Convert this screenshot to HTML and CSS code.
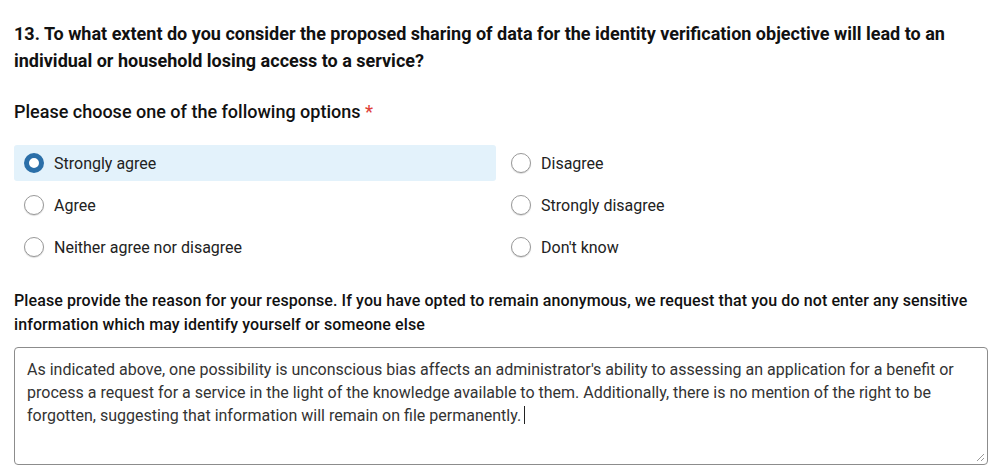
FILE: index.html
```html
<!DOCTYPE html>
<html lang="en">
<head>
<meta charset="utf-8">
<link rel="stylesheet" href="styles.css">
</head>
<body>
<main class="question">
  <h2 class="q-title">13. To what extent do you consider the proposed sharing of data for the identity verification objective will lead to an individual or household losing access to a service?</h2>
  <p class="q-prompt">Please choose one of the following options <span class="req">*</span></p>
  <div class="options">
    <div class="option selected"><span class="radio"></span><span class="opt-label">Strongly agree</span></div>
    <div class="option"><span class="radio"></span><span class="opt-label">Disagree</span></div>
    <div class="option"><span class="radio"></span><span class="opt-label">Agree</span></div>
    <div class="option"><span class="radio"></span><span class="opt-label">Strongly disagree</span></div>
    <div class="option"><span class="radio"></span><span class="opt-label">Neither agree nor disagree</span></div>
    <div class="option"><span class="radio"></span><span class="opt-label">Don't know</span></div>
  </div>
  <p class="reason-label">Please provide the reason for your response. If you have opted to remain anonymous, we request that you do not enter any sensitive information which may identify yourself or someone else</p>
  <div class="textarea">As indicated above, one possibility is unconscious bias affects an administrator's ability to assessing an application for a benefit or process a request for a service in the light of the knowledge available to them. Additionally, there is no mention of the right to be forgotten, suggesting that information will remain on file permanently.<span class="caret"></span>
    <svg class="grip" width="10" height="10" viewBox="0 0 10 10"><path d="M9 2 L2 9 M9 6 L6 9" stroke="#999" stroke-width="1" fill="none"/></svg>
  </div>
</main>
</body>
</html>
```
FILE: styles.css
```css
html, body {
  margin: 0;
  padding: 0;
  background: #fff;
}
body {
  font-family: Roboto, "Liberation Sans", Arial, sans-serif;
  color: #222;
}
.question {
  padding: 20px 16px 0 14px;
}
.q-title {
  margin: 0;
  font-size: 18px;
  line-height: 27px;
  font-weight: 700;
  color: #111;
}
.q-prompt {
  margin: 24px 0 0;
  font-size: 18px;
  line-height: 27px;
  font-weight: 500;
  color: #111;
}
.req {
  color: #e0423a;
}
.options {
  margin-top: 20px;
  display: grid;
  grid-template-columns: 482px 482px;
  column-gap: 5px;
  row-gap: 6px;
}
.option {
  height: 36px;
  display: flex;
  align-items: center;
  padding-left: 10px;
  border-radius: 3px;
  font-size: 16px;
  color: #222;
}
.option.selected {
  background: #e3f2fb;
}
.radio {
  width: 18px;
  height: 18px;
  border: 1px solid #999;
  border-radius: 50%;
  background: #fff;
  box-shadow: 0 1px 1px rgba(0,0,0,0.15);
  flex: none;
}
.option.selected .radio {
  width: 10px;
  height: 10px;
  border: 5px solid #2b6fa8;
  box-shadow: none;
}
.opt-label {
  margin-left: 10px;
}
.reason-label {
  margin: 24px 0 0;
  font-size: 16px;
  line-height: 24px;
  font-weight: 500;
  letter-spacing: 0.1px;
  color: #111;
}
.textarea {
  position: relative;
  margin-top: 10px;
  width: 948px;
  height: 96px;
  border: 1px solid #8c8c8c;
  border-radius: 4px;
  padding: 10px 12px;
  font-size: 16px;
  line-height: 23px;
  color: #333;
  background: #fff;
}
.caret {
  display: inline-block;
  width: 1px;
  height: 18px;
  background: #222;
  vertical-align: -3px;
  margin-left: 3px;
}
.grip {
  position: absolute;
  right: 2px;
  bottom: 2px;
}
```
